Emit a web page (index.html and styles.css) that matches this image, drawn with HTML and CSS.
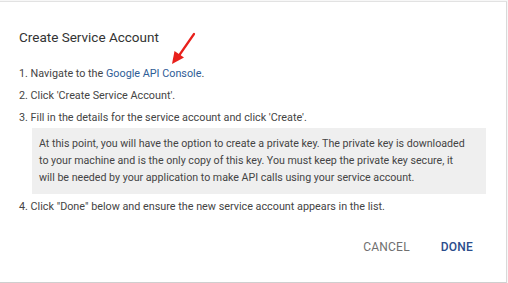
FILE: index.html
```html
<!DOCTYPE html>
<html lang="en">
<head>
    <meta charset="UTF-8">
    <title>Create Service Account</title>
    <link rel="stylesheet" href="styles.css">
</head>
<body>
    <div class="dialog">
        <h2 class="title">Create Service Account</h2>

        <ol class="steps">
            <li class="step">
                1. Navigate to the <a class="link" href="#">Google API Console</a>.
                <svg class="arrow" width="30" height="34" viewBox="0 0 30 34">
                    <path d="M26 2 L10 25" stroke="#e8201b" stroke-width="2.2" stroke-linecap="round" fill="none"/>
                    <path d="M4 32 L6.5 19 L16 25.5 Z" fill="#e8201b"/>
                </svg>
            </li>
            <li class="step">2. Click 'Create Service Account'.</li>
            <li class="step">3. Fill in the details for the service account and click 'Create'.</li>
            <li class="note">
                At this point, you will have the option to create a private key. The private key is downloaded<br>
                to your machine and is the only copy of this key. You must keep the private key secure, it<br>
                will be needed by your application to make API calls using your service account.
            </li>
            <li class="step">4. Click "Done" below and ensure the new service account appears in the list.</li>
        </ol>

        <div class="actions">
            <button class="action cancel">CANCEL</button>
            <button class="action done">DONE</button>
        </div>
    </div>
</body>
</html>
```

FILE: styles.css
```css
* {
    margin: 0;
    padding: 0;
    box-sizing: border-box;
}

body {
    font-family: Roboto, 'Liberation Sans', Arial, sans-serif;
    background: #f7f7f7;
    width: 508px;
    height: 283px;
    overflow: hidden;
}

.dialog {
    background: white;
    height: 282px;
    width: 507px;
    margin-top: 1px;
    border-top: 1px solid #e2e2e2;
    border-right: 1px solid #d9d9d9;
    border-bottom: 1px solid #cfcfcf;
    padding: 25px 0 0 19px;
}

.title {
    font-size: 13.5px;
    font-weight: 400;
    color: #333;
    line-height: 20px;
    margin-bottom: 16px;
}

.steps {
    list-style: none;
    font-size: 10.8px;
    color: #444;
}

.step {
    line-height: 22px;
    position: relative;
}

.link {
    color: #2e5d96;
    text-decoration: none;
}

.arrow {
    position: absolute;
    left: 149px;
    top: -31px;
}

.note {
    background: #efefef;
    margin: -1px 20px 2px 13px;
    padding: 7px 4px 8px 7px;
    font-size: 10.65px;
    line-height: 17px;
    color: #444;
    white-space: nowrap;
}

.actions {
    display: flex;
    justify-content: flex-end;
    gap: 7px;
    margin-top: 14px;
    padding-right: 21px;
}

.action {
    background: none;
    border: none;
    font-family: inherit;
    font-size: 12px;
    font-weight: 500;
    line-height: 14px;
    padding: 8px 12px;
    letter-spacing: 0.2px;
}

.cancel {
    color: #707070;
    font-weight: 400;
}

.done {
    color: #2b4c8c;
}
```
